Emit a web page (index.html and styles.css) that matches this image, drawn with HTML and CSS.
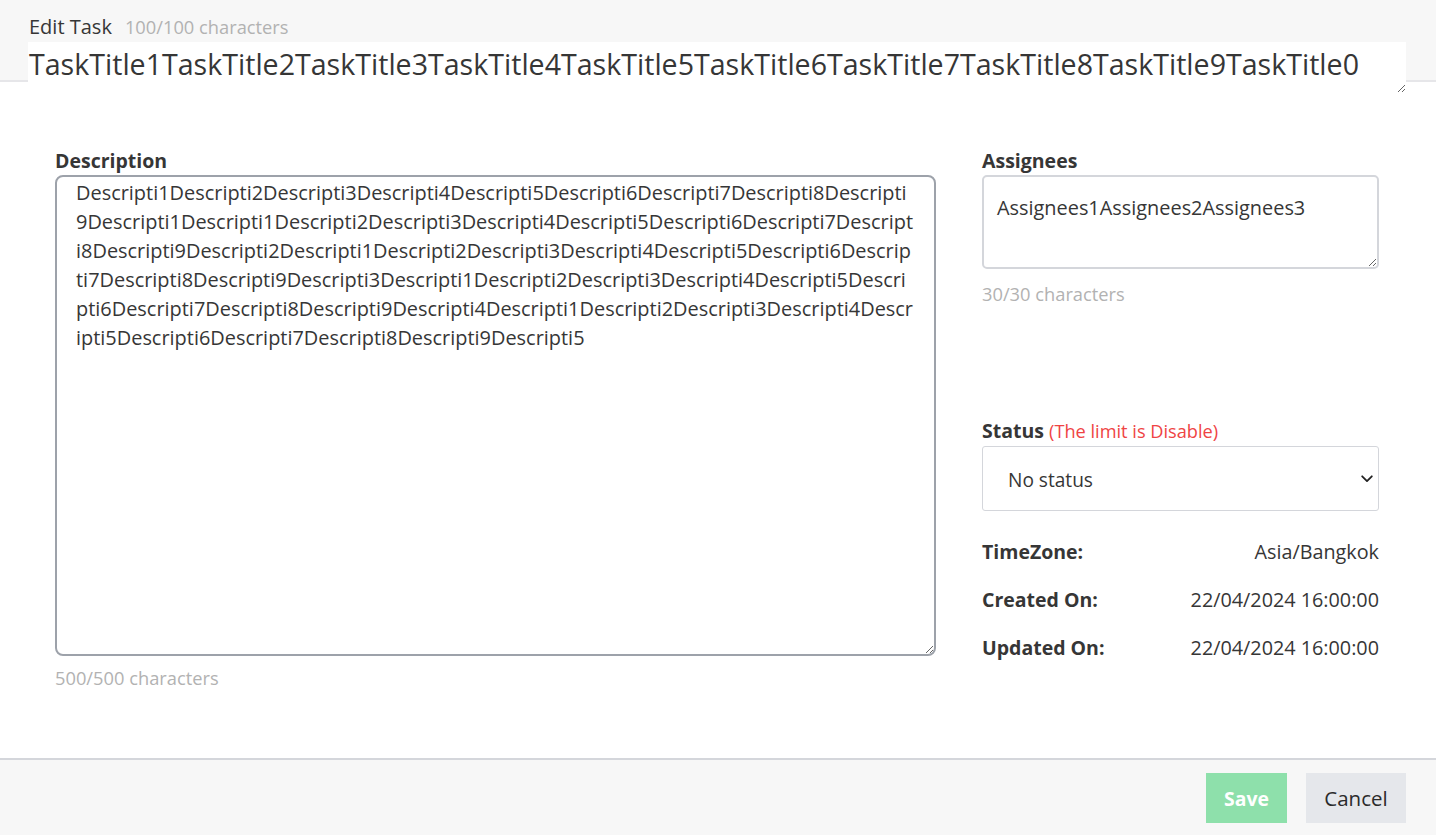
FILE: index.html
```html
<!DOCTYPE html>
<html lang="en">
<head>
<meta charset="utf-8">
<title>Edit Task</title>
<link rel="stylesheet" href="styles.css">
</head>
<body>
<div class="modal">
  <header class="head">
    <div class="head-top"><span class="head-title">Edit Task</span><span class="count">100/100 characters</span></div>
    <textarea class="title-input" rows="1">TaskTitle1TaskTitle2TaskTitle3TaskTitle4TaskTitle5TaskTitle6TaskTitle7TaskTitle8TaskTitle9TaskTitle0</textarea>
  </header>
  <main class="body">
    <section class="col-left">
      <label class="label">Description</label>
      <textarea class="desc">Descripti1Descripti2Descripti3Descripti4Descripti5Descripti6Descripti7Descripti8Descripti9Descripti1Descripti1Descripti2Descripti3Descripti4Descripti5Descripti6Descripti7Descripti8Descripti9Descripti2Descripti1Descripti2Descripti3Descripti4Descripti5Descripti6Descripti7Descripti8Descripti9Descripti3Descripti1Descripti2Descripti3Descripti4Descripti5Descripti6Descripti7Descripti8Descripti9Descripti4Descripti1Descripti2Descripti3Descripti4Descripti5Descripti6Descripti7Descripti8Descripti9Descripti5</textarea>
      <p class="count count-left">500/500 characters</p>
    </section>
    <section class="col-right">
      <label class="label">Assignees</label>
      <textarea class="assignees">Assignees1Assignees2Assignees3</textarea>
      <p class="count count-right">30/30 characters</p>
      <div class="status-block">
        <label class="label label-status">Status <span class="limit">(The limit is Disable)</span></label>
        <div class="select-wrap">
          <select class="select"><option>No status</option></select>
          <svg class="chev" width="12" height="8" viewBox="0 0 12 8"><path d="M1.2 1.3 6 6.1l4.8-4.8" fill="none" stroke="#222" stroke-width="1.8" stroke-linecap="round" stroke-linejoin="round"/></svg>
        </div>
      </div>
      <dl class="meta">
        <div class="meta-row"><dt>TimeZone:</dt><dd>Asia/Bangkok</dd></div>
        <div class="meta-row"><dt>Created On:</dt><dd>22/04/2024 16:00:00</dd></div>
        <div class="meta-row"><dt>Updated On:</dt><dd>22/04/2024 16:00:00</dd></div>
      </dl>
    </section>
  </main>
  <footer class="foot">
    <button class="btn btn-save" disabled>Save</button>
    <button class="btn btn-cancel">Cancel</button>
  </footer>
</div>
</body>
</html>
```
FILE: styles.css
```css
* { box-sizing: border-box; }
html, body { margin: 0; padding: 0; }
body { font-family: "Open Sans", sans-serif; color: #363636; background: #fff; }
.modal { width: 1436px; height: 835px; display: flex; flex-direction: column; }
.head { background: #f7f7f7; border-bottom: 2px solid #e6e6e9; height: 82px; padding: 14px 30px 0 28px; }
.head-top { height: 26px; line-height: 26px; margin-bottom: 2px; padding-left: 1px; white-space: nowrap; }
.head-title { font-size: 20px; margin-right: 13px; }
.count { color: #b2b2b2; font-size: 18.3px; }
.title-input { display: block; width: 1378px; height: 51px; border: 0; padding: 2px 1px; font-family: inherit; font-size: 28.58px; color: #363636; background: #fff; resize: vertical; outline: none; overflow: hidden; white-space: nowrap; }
.body { flex: 1; display: flex; padding: 0 57px 0 55px; gap: 46px; }
.col-left { width: 881px; display: flex; flex-direction: column; padding-top: 66px; }
.col-right { width: 397px; display: flex; flex-direction: column; padding-top: 66px; }
.label { font-weight: 700; font-size: 19.5px; line-height: 26px; display: block; margin-bottom: 1px; white-space: nowrap; }
.label-status { margin-bottom: 2px; }
.limit { font-weight: 400; color: #ef4444; font-size: 18.2px; }
.desc { width: 881px; height: 481px; border: 2px solid #9da2aa; border-radius: 8px; padding: 1px 18.5px 1px 19px; font-family: inherit; font-size: 19.93px; line-height: 29px; color: #363636; resize: vertical; outline: none; }
.count-left { margin: 11px 0 0; line-height: 22px; }
.count-right { margin: 14px 0 0; line-height: 22px; }
.assignees { width: 397px; height: 94px; border: 2px solid #d4d6db; border-radius: 5px; padding: 17px 13px; font-family: inherit; font-size: 19.9px; line-height: 27px; color: #363636; resize: vertical; outline: none; }
.status-block { margin-top: 113px; }
.select-wrap { position: relative; }
.select { appearance: none; -webkit-appearance: none; display: block; width: 397px; height: 65px; border: 1px solid #d4d6db; border-radius: 3px; background: #fff; padding: 3px 40px 0 25px; font-family: inherit; font-size: 19.1px; color: #363636; outline: none; }
.chev { position: absolute; right: 6px; top: 29px; }
.meta { margin: 28px 0 0; display: flex; flex-direction: column; gap: 22px; }
.meta-row { display: flex; justify-content: space-between; line-height: 26px; }
.meta-row dt { font-weight: 700; font-size: 19.5px; }
.meta-row dd { margin: 0; font-size: 19.8px; }
.foot { height: 77px; background: #f7f7f7; border-top: 2px solid #d4d6db; display: flex; justify-content: flex-end; align-items: flex-start; padding: 13px 30px 0 0; gap: 19px; }
.btn { height: 50px; border: 0; border-radius: 0; font-family: inherit; padding: 0; }
.btn-save { background: #8ee0ab; color: #fff; font-weight: 700; font-size: 19.4px; width: 81px; }
.btn-cancel { background: #e5e7eb; color: #2b2b2b; font-size: 20.5px; width: 100px; }
```
